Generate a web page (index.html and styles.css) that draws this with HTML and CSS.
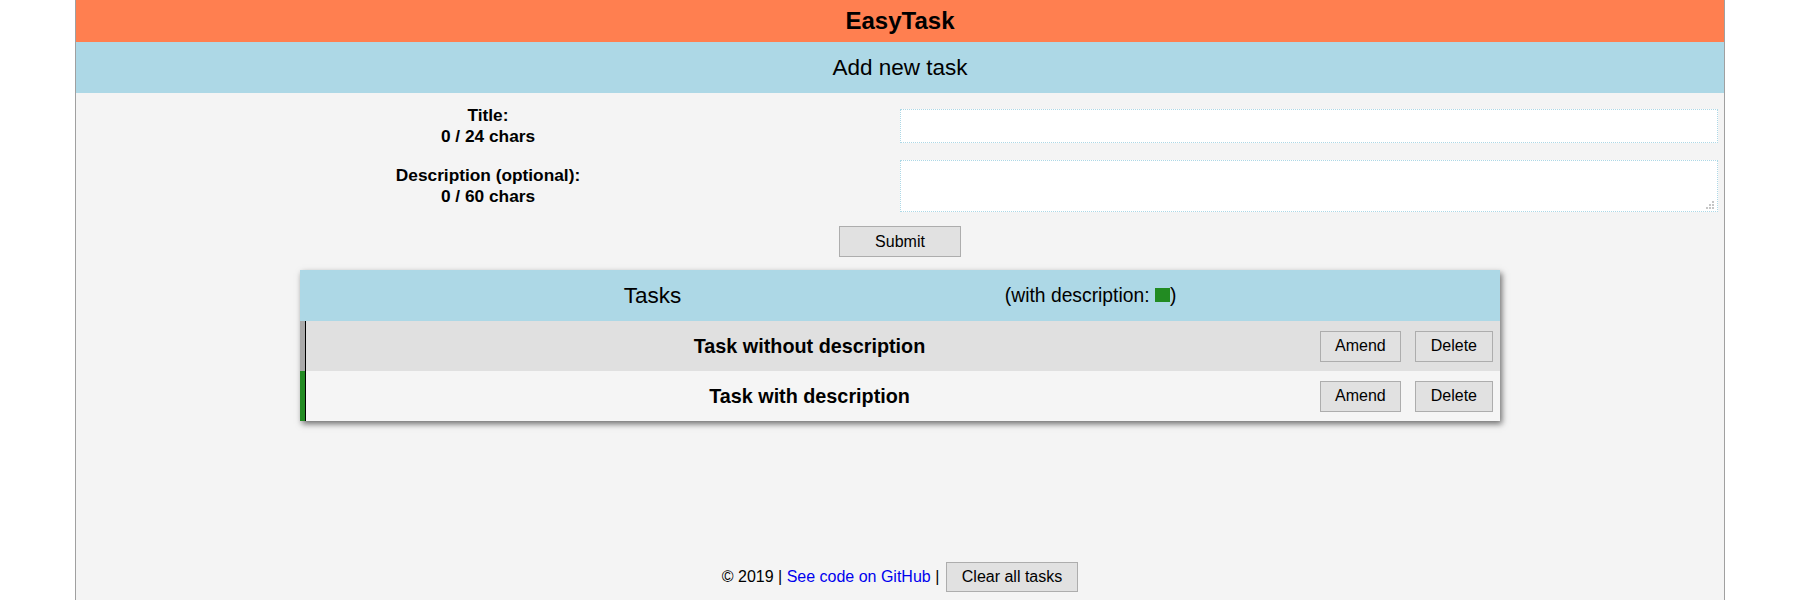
FILE: index.html
```html
<!DOCTYPE html>
<html lang="en">
<head>
<meta charset="utf-8">
<title>EasyTask</title>
<link rel="stylesheet" href="styles.css">
</head>
<body>
<div class="app">
  <header class="topbar">EasyTask</header>
  <div class="subbar">Add new task</div>
  <form class="form">
    <div class="label">Title:<br>0 / 24 chars</div>
    <div class="field"><input class="text-input" type="text"></div>
    <div class="label">Description (optional):<br>0 / 60 chars</div>
    <div class="field">
      <div class="area-wrap">
        <textarea class="text-area"></textarea>
        <svg class="grip" width="8" height="8" viewBox="0 0 8 8">
          <rect x="6" y="0" width="2" height="2" fill="#c6c6c6"/>
          <rect x="3" y="3" width="2" height="2" fill="#c6c6c6"/>
          <rect x="6" y="3" width="2" height="2" fill="#c6c6c6"/>
          <rect x="0" y="6" width="2" height="2" fill="#c6c6c6"/>
          <rect x="3" y="6" width="2" height="2" fill="#c6c6c6"/>
          <rect x="6" y="6" width="2" height="2" fill="#c6c6c6"/>
        </svg>
      </div>
    </div>
    <div class="submit-row"><button type="button" class="btn btn-submit">Submit</button></div>
  </form>
  <section class="panel">
    <div class="panel-head">
      <span class="panel-title">Tasks</span>
      <span class="panel-legend">(with description: <span class="legend-box"></span>)</span>
    </div>
    <div class="task task-plain">
      <div class="task-title">Task without description</div>
      <button type="button" class="btn btn-row">Amend</button>
      <button type="button" class="btn btn-row">Delete</button>
    </div>
    <div class="task task-desc">
      <div class="task-title">Task with description</div>
      <button type="button" class="btn btn-row">Amend</button>
      <button type="button" class="btn btn-row">Delete</button>
    </div>
  </section>
  <footer class="footer">© 2019 | <a class="link" href="#">See code on GitHub</a> | <button type="button" class="btn btn-clear">Clear all tasks</button></footer>
</div>
</body>
</html>
```
FILE: styles.css
```css
html, body {
  margin: 0;
  padding: 0;
  background: #ffffff;
}
body {
  font-family: "Liberation Sans", Arial, sans-serif;
  color: #000;
}
.app {
  width: 1650px;
  margin: 0 auto;
  box-sizing: border-box;
  border-left: 1px solid #a0a0a0;
  border-right: 1px solid #a0a0a0;
  background: #f4f4f4;
  min-height: 100vh;
  display: flex;
  flex-direction: column;
}
.topbar {
  height: 42px;
  background: #ff7f50;
  font-weight: bold;
  font-size: 24px;
  display: flex;
  align-items: center;
  justify-content: center;
}
.subbar {
  height: 51px;
  background: #add8e6;
  font-size: 22.5px;
  display: flex;
  align-items: center;
  justify-content: center;
}
.form {
  display: grid;
  grid-template-columns: 1fr 1fr;
  row-gap: 13px;
  padding-top: 12px;
  align-items: center;
  margin: 0;
}
.label {
  text-align: center;
  font-weight: bold;
  font-size: 17.3px;
  line-height: 21px;
}
.field {
  padding-right: 6px;
}
.text-input {
  display: block;
  width: 100%;
  height: 34px;
  box-sizing: border-box;
  border: 1px dotted #add8e6;
  background: #fff;
  margin: 0;
  outline: none;
}
.area-wrap {
  position: relative;
}
.text-area {
  display: block;
  width: 100%;
  height: 52px;
  box-sizing: border-box;
  border: 1px dotted #add8e6;
  background: #fff;
  margin: 0;
  resize: none;
  outline: none;
}
.grip {
  position: absolute;
  right: 4px;
  bottom: 3px;
}
.submit-row {
  grid-column: 1 / -1;
  display: flex;
  justify-content: center;
  margin-top: 1px;
}
.btn {
  font-family: "Liberation Sans", Arial, sans-serif;
  font-size: 16px;
  color: #000;
  background: #e1e1e1;
  border: 1px solid #adadad;
  border-radius: 0;
  margin: 0;
  box-sizing: border-box;
}
.btn-submit {
  height: 31px;
  padding: 0 35px;
}
.panel {
  width: 1200px;
  margin: 13px auto 0;
  box-shadow: 2px 3px 6px rgba(0, 0, 0, 0.55);
}
.panel-head {
  height: 51px;
  background: #add8e6;
  display: flex;
  align-items: center;
  justify-content: space-evenly;
}
.panel-title {
  font-size: 22.5px;
}
.panel-legend {
  font-size: 19.3px;
}
.legend-box {
  display: inline-block;
  width: 15px;
  height: 14px;
  background: #228b22;
  vertical-align: baseline;
}
.task {
  height: 50px;
  display: flex;
  align-items: center;
  border-left: 5px solid #a9a9a9;
  background: #e0e0e0;
}
.task-desc {
  border-left-color: #228b22;
  background: #f5f5f5;
}
.task-title {
  flex: 1;
  align-self: stretch;
  border-left: 1px solid #000;
  display: flex;
  align-items: center;
  justify-content: center;
  font-weight: bold;
  font-size: 19.8px;
}
.btn-row {
  height: 31px;
  padding: 0 14px;
  margin: 0 7px;
}
.task .btn-row:nth-of-type(2) {
  padding: 0 15px;
}
.footer {
  margin-top: auto;
  text-align: center;
  font-size: 16px;
  padding-bottom: 8px;
}
.link {
  color: #0000ee;
  text-decoration: none;
}
.btn-clear {
  height: 30px;
  padding: 0 15px;
  margin-left: 2px;
}
```
